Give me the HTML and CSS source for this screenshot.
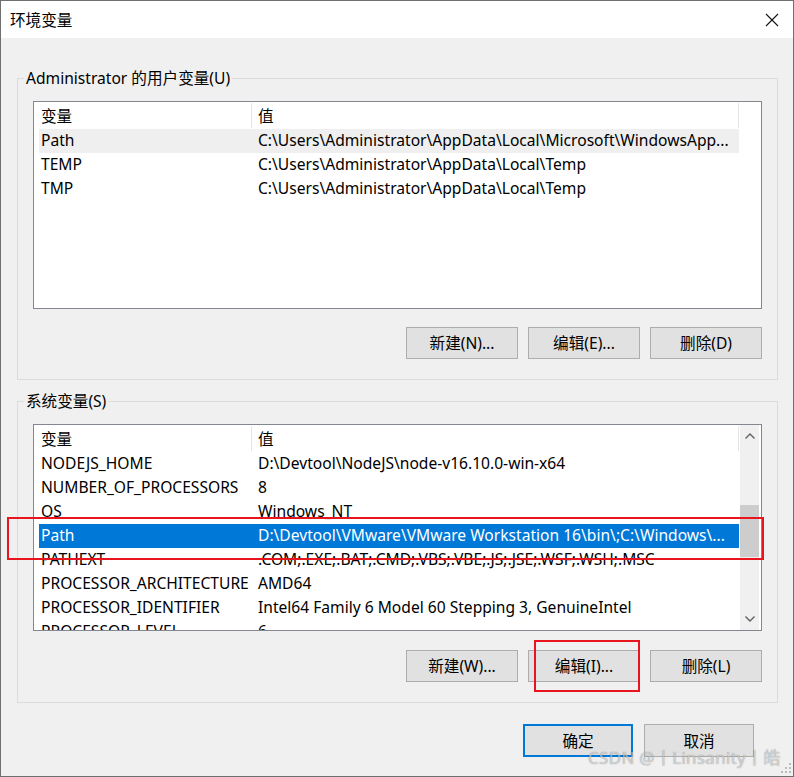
FILE: index.html
```html
<!DOCTYPE html>
<html lang="zh-CN">
<head>
<meta charset="utf-8">
<title>环境变量</title>
<link rel="stylesheet" href="styles.css">
</head>
<body>
<div class="window">
  <div class="titlebar">
    <span class="title">环境变量</span>
    <svg class="close" width="14" height="14" viewBox="0 0 14 14"><path d="M1 1 L13 13 M13 1 L1 13" stroke="#111" stroke-width="1.1" fill="none"/></svg>
  </div>
  <div class="content">
    <fieldset class="group g1">
      <legend>Administrator 的用户变量(U)</legend>
      <div class="list l1">
        <div class="rows">
          <div class="row head"><span class="c1">变量</span><span class="c2">值</span></div>
          <div class="row hover"><span class="c1">Path</span><span class="c2">C:\Users\Administrator\AppData\Local\Microsoft\WindowsApp...</span></div>
          <div class="row"><span class="c1">TEMP</span><span class="c2">C:\Users\Administrator\AppData\Local\Temp</span></div>
          <div class="row"><span class="c1">TMP</span><span class="c2">C:\Users\Administrator\AppData\Local\Temp</span></div>
        </div>
      </div>
      <div class="btns">
        <button class="btn">新建(N)...</button>
        <button class="btn">编辑(E)...</button>
        <button class="btn">删除(D)</button>
      </div>
    </fieldset>

    <fieldset class="group g2">
      <legend>系统变量(S)</legend>
      <div class="list l2">
        <div class="rows">
          <div class="row head"><span class="c1">变量</span><span class="c2">值</span></div>
          <div class="row"><span class="c1">NODEJS_HOME</span><span class="c2">D:\Devtool\NodeJS\node-v16.10.0-win-x64</span></div>
          <div class="row"><span class="c1">NUMBER_OF_PROCESSORS</span><span class="c2">8</span></div>
          <div class="row"><span class="c1">OS</span><span class="c2">Windows_NT</span></div>
          <div class="row selected"><span class="c1">Path</span><span class="c2">D:\Devtool\VMware\VMware Workstation 16\bin\;C:\Windows\...</span></div>
          <div class="row"><span class="c1">PATHEXT</span><span class="c2">.COM;.EXE;.BAT;.CMD;.VBS;.VBE;.JS;.JSE;.WSF;.WSH;.MSC</span></div>
          <div class="row"><span class="c1">PROCESSOR_ARCHITECTURE</span><span class="c2">AMD64</span></div>
          <div class="row"><span class="c1">PROCESSOR_IDENTIFIER</span><span class="c2">Intel64 Family 6 Model 60 Stepping 3, GenuineIntel</span></div>
          <div class="row"><span class="c1">PROCESSOR_LEVEL</span><span class="c2">6</span></div>
        </div>
        <div class="scrollbar">
          <div class="arrow"><svg width="12" height="8" viewBox="0 0 12 8"><path d="M1.5 6.5 L6 2 L10.5 6.5" stroke="#606060" stroke-width="1.4" fill="none"/></svg></div>
          <div class="track"><div class="thumb"></div></div>
          <div class="arrow"><svg width="12" height="8" viewBox="0 0 12 8"><path d="M1.5 1.5 L6 6 L10.5 1.5" stroke="#606060" stroke-width="1.4" fill="none"/></svg></div>
        </div>
      </div>
      <div class="btns">
        <button class="btn">新建(W)...</button>
        <button class="btn">编辑(I)...</button>
        <button class="btn">删除(L)</button>
      </div>
    </fieldset>

    <div class="dlgbtns">
      <button class="dbtn default">确定</button>
      <button class="dbtn">取消</button>
    </div>
  </div>

  <div class="mark mark1"></div>
  <div class="mark mark2"></div>
  <div class="watermark">CSDN @丨Linsanity丨皓</div>
  <svg class="grip" width="10" height="10" viewBox="0 0 10 10">
    <rect x="8" y="0" width="2" height="2" fill="#bcbcbc"/>
    <rect x="4" y="4" width="2" height="2" fill="#bcbcbc"/>
    <rect x="8" y="4" width="2" height="2" fill="#bcbcbc"/>
    <rect x="0" y="8" width="2" height="2" fill="#bcbcbc"/>
    <rect x="4" y="8" width="2" height="2" fill="#bcbcbc"/>
    <rect x="8" y="8" width="2" height="2" fill="#bcbcbc"/>
  </svg>
</div>
</body>
</html>
```

FILE: styles.css
```css
* { box-sizing: border-box; }
html, body { margin: 0; padding: 0; background: #f0f0f0; }
body {
  font-family: "Noto Sans", "Noto Sans CJK SC", sans-serif;
  font-size: 15.6px;
  color: #000;
}
.window {
  position: relative;
  width: 794px;
  height: 777px;
  border: 1px solid #6f6f6f;
  background: #f0f0f0;
  overflow: hidden;
}
.titlebar {
  height: 37px;
  background: #fff;
  display: flex;
  align-items: center;
  justify-content: space-between;
  padding: 0 14px 0 9px;
}
.title { font-size: 15.6px; line-height: 20px; }
.content { display: flex; flex-direction: column; }
.group {
  margin: 0 15px 0 16px;
  padding: 13px 15px 20px 15px;
  border: 1px solid #dcdcdc;
  min-width: 0;
}
.g1 { margin-top: 30px; }
.g2 { margin-top: 11px; padding-top: 13px; }
.group legend {
  padding: 0 2px;
  margin-left: -9px;
  line-height: 20px;
  font-size: 15.6px;
}
.list {
  background: #fff;
  border: 1px solid #828790;
  display: flex;
  overflow: hidden;
}
.l1 { height: 208px; }
.l2 { height: 207px; }
.rows {
  flex: 1;
  padding-left: 5px;
  min-width: 0;
}
.row {
  display: flex;
  height: 24px;
  line-height: 22px;
  white-space: nowrap;
  width: 700px;
}
.row .c1 { width: 213px; padding-left: 2px; flex: none; overflow: hidden; }
.row .c2 { width: 487px; padding-left: 6px; flex: none; overflow: hidden; }
.row.head { height: 27px; padding-top: 1px; }
.row.head .c1,
.row.head .c2 { border-right: 1px solid #e5e5e5; height: 25px; line-height: 26px; }
.row.hover { background: #efefef; }
.row.selected { background: #0078d7; color: #fff; }
.scrollbar {
  width: 19px;
  margin-right: 2px;
  background: #f0f0f0;
  display: flex;
  flex-direction: column;
  flex: none;
}
.arrow {
  height: 22px;
  display: flex;
  align-items: center;
  justify-content: center;
}
.track { flex: 1; }
.thumb {
  margin-top: 58px;
  height: 52px;
  background: #cdcdcd;
}
.btns {
  display: flex;
  justify-content: flex-end;
  gap: 10px;
  margin-top: 18px;
}
.g2 .btns { margin-top: 19px; }
.btn, .dbtn {
  font-family: inherit;
  font-size: 15.6px;
  color: #000;
  background: #e1e1e1;
  border: 1px solid #adadad;
  padding: 0;
  margin: 0;
  width: 112px;
  height: 32px;
  line-height: 28px;
}
.dlgbtns {
  display: flex;
  justify-content: flex-end;
  gap: 11px;
  margin: 21px 39px 0 0;
}
.dbtn { width: 110px; height: 33px; }
.dbtn.default { border: 2px solid #0078d7; }
.mark {
  position: absolute;
  border: 2px solid #e8141e;
}
.mark1 { left: 6px; top: 516px; width: 757px; height: 43px; }
.mark2 { left: 533px; top: 639px; width: 106px; height: 52px; }
.watermark {
  position: absolute;
  left: 587px;
  top: 745px;
  font-family: "Noto Sans", "Noto Sans CJK SC", sans-serif;
  font-size: 17px;
  line-height: 24px;
  letter-spacing: 0.3px;
  color: rgba(255, 255, 255, 0.6);
  text-shadow: 0 0 1px rgba(0, 0, 0, 0.5);
  white-space: nowrap;
}
.grip { position: absolute; right: 2px; bottom: 3px; }
```
